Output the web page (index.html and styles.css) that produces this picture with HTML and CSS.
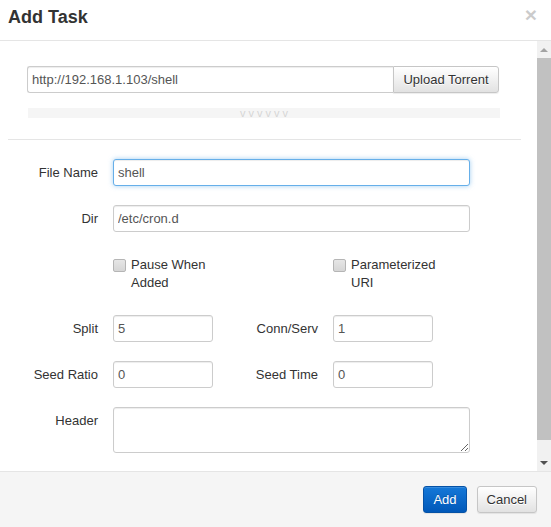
FILE: index.html
```html
<!DOCTYPE html>
<html lang="en">
<head>
<meta charset="utf-8">
<title>Add Task</title>
<link rel="stylesheet" href="styles.css">
</head>
<body>
<div class="modal">
  <div class="modal-header">
    <h4 class="modal-title">Add Task</h4>
    <button class="close" type="button">&times;</button>
  </div>
  <div class="modal-body-wrap">
    <div class="modal-body">
      <div class="url-section">
        <div class="input-group">
          <input class="form-control url-input" type="text" value="http://192.168.1.103/shell">
          <button class="btn btn-default btn-upload" type="button">Upload Torrent</button>
        </div>
        <div class="drop-handle">vvvvvv</div>
      </div>
      <div class="divider"></div>
      <form class="form-grid">
        <label class="control-label">File Name</label>
        <input class="form-control span-wide focused" type="text" value="shell">

        <label class="control-label">Dir</label>
        <input class="form-control span-wide" type="text" value="/etc/cron.d">

        <div class="checkbox col-2">
          <input type="checkbox" class="cb">
          <span class="cb-text">Pause When Added</span>
        </div>
        <div class="checkbox col-4">
          <input type="checkbox" class="cb">
          <span class="cb-text">Parameterized URI</span>
        </div>

        <label class="control-label">Split</label>
        <input class="form-control col-2" type="text" value="5">
        <label class="control-label col-3">Conn/Serv</label>
        <input class="form-control col-4" type="text" value="1">

        <label class="control-label">Seed Ratio</label>
        <input class="form-control col-2" type="text" value="0">
        <label class="control-label col-3">Seed Time</label>
        <input class="form-control col-4" type="text" value="0">

        <label class="control-label">Header</label>
        <textarea class="form-control span-wide textarea" rows="2"></textarea>
      </form>
    </div>
    <div class="scrollbar">
      <div class="sb-btn"><span class="arrow-up"></span></div>
      <div class="sb-thumb"></div>
      <div class="sb-track"></div>
      <div class="sb-btn"><span class="arrow-down"></span></div>
    </div>
  </div>
  <div class="modal-footer">
    <button class="btn btn-primary" type="button">Add</button>
    <button class="btn btn-default" type="button">Cancel</button>
  </div>
</div>
</body>
</html>
```

FILE: styles.css
```css
* {
  box-sizing: border-box;
}

html, body {
  margin: 0;
  padding: 0;
  background: #fff;
}

body {
  font-family: "Liberation Sans", Arial, Helvetica, sans-serif;
  font-size: 13px;
  line-height: 1.42857;
  color: #333;
}

.modal {
  width: 551px;
  height: 527px;
  display: flex;
  flex-direction: column;
  overflow: hidden;
}

/* Header */
.modal-header {
  height: 41px;
  flex: none;
  display: flex;
  justify-content: space-between;
  align-items: flex-start;
  padding: 7px 14px 0 8px;
  border-bottom: 1px solid #e5e5e5;
}

.modal-title {
  margin: 0;
  font-size: 18px;
  font-weight: bold;
  line-height: 20px;
  color: #333;
}

.close {
  margin: -3px 0 0 0;
  padding: 0;
  border: 0;
  background: transparent;
  font-family: "Liberation Sans", Arial, sans-serif;
  font-size: 21px;
  font-weight: bold;
  line-height: 1;
  color: #000;
  opacity: 0.2;
  text-shadow: 0 1px 0 #fff;
}

/* Body */
.modal-body-wrap {
  height: 430px;
  flex: none;
  display: flex;
}

.modal-body {
  flex: 1;
  overflow: hidden;
}

.url-section {
  padding-top: 25px;
  margin: 0 38px 0 27px;
}

.input-group {
  display: flex;
  height: 27px;
}

.form-control {
  display: block;
  height: 27px;
  padding: 4px 4px;
  font-family: inherit;
  font-size: 13px;
  line-height: 1.42857;
  color: #555;
  background: #fff;
  border: 1px solid #ccc;
  border-radius: 3px;
  box-shadow: inset 0 1px 1px rgba(0, 0, 0, 0.075);
  outline: none;
  margin: 0;
  width: 100%;
}

.url-input {
  flex: 1;
  min-width: 0;
  border-radius: 3px 0 0 3px;
  border-right: 0;
}

.btn {
  display: inline-block;
  height: 27px;
  margin: 0;
  padding: 4px 9px;
  font-family: inherit;
  font-size: 13px;
  line-height: 1.42857;
  border: 1px solid transparent;
  border-radius: 3px;
  white-space: nowrap;
}

.btn-default {
  color: #333;
  background: linear-gradient(to bottom, #fff 0, #e2e2e2 100%);
  border-color: #c6c6c6;
  text-shadow: 0 1px 0 #fff;
  box-shadow: inset 0 1px 0 rgba(255, 255, 255, 0.15), 0 1px 1px rgba(0, 0, 0, 0.075);
}

.btn-upload {
  width: 106px;
  flex: none;
  border-radius: 0 3px 3px 0;
}

.btn-primary {
  color: #fff;
  background: linear-gradient(to bottom, #1478d8 0, #0058b9 100%);
  border-color: #0552a6;
  text-shadow: 0 -1px 0 rgba(0, 0, 0, 0.2);
  box-shadow: inset 0 1px 0 rgba(255, 255, 255, 0.15), 0 1px 1px rgba(0, 0, 0, 0.075);
}

.drop-handle {
  margin: 15px -1px 0 1px;
  height: 10px;
  background: #f5f5f5;
  color: #d6d6d6;
  font-size: 11px;
  line-height: 10px;
  letter-spacing: 3px;
  text-indent: 3px;
  text-align: center;
  overflow: hidden;
}

.divider {
  margin: 21px 16px 0 8px;
  border-top: 1px solid #e5e5e5;
}

/* Form grid */
.form-grid {
  margin: 19px 0 0 0;
  padding-left: 8px;
  display: grid;
  grid-template-columns: 90px 100px 90px 100px 22px;
  column-gap: 15px;
  row-gap: 19px;
  align-items: start;
}

.control-label {
  grid-column: 1;
  text-align: right;
  padding-top: 5px;
  color: #333;
  white-space: nowrap;
}

.control-label.col-3 {
  grid-column: 3;
}

.span-wide {
  grid-column: 2 / 6;
}

.focused {
  border-color: #66afe9;
  box-shadow: inset 0 1px 1px rgba(0, 0, 0, 0.075), 0 0 5px rgba(102, 175, 233, 0.6);
}

.textarea {
  height: 46px;
  resize: vertical;
}

.checkbox {
  display: flex;
  align-items: flex-start;
  padding: 5px 0 4px 0;
  line-height: 18px;
  color: #333;
}

.col-2 {
  grid-column: 2;
}

.col-4 {
  grid-column: 4;
}

.cb {
  appearance: none;
  -webkit-appearance: none;
  flex: none;
  width: 13px;
  height: 13px;
  margin: 3px 5px 0 0;
  border: 1px solid #b5b5b5;
  border-radius: 2px;
  background: linear-gradient(to bottom, #e6e6e6, #d6d6d6);
}

.cb-text {
  display: block;
}

/* Fake scrollbar */
.scrollbar {
  width: 14px;
  flex: none;
  display: flex;
  flex-direction: column;
  background: #f1f1f1;
}

.sb-btn {
  height: 17px;
  flex: none;
  display: flex;
  align-items: center;
  justify-content: center;
}

.arrow-up {
  width: 0;
  height: 0;
  border-left: 4px solid transparent;
  border-right: 4px solid transparent;
  border-bottom: 4px solid #a3a3a3;
}

.arrow-down {
  width: 0;
  height: 0;
  border-left: 4px solid transparent;
  border-right: 4px solid transparent;
  border-top: 4px solid #505050;
}

.sb-thumb {
  height: 382px;
  flex: none;
  background: #c1c1c1;
}

.sb-track {
  flex: 1;
}

/* Footer */
.modal-footer {
  flex: 1;
  display: flex;
  justify-content: flex-end;
  align-items: flex-start;
  gap: 10px;
  padding: 14px 14px 0 0;
  border-top: 1px solid #e5e5e5;
  background: #f5f5f5;
}
```
